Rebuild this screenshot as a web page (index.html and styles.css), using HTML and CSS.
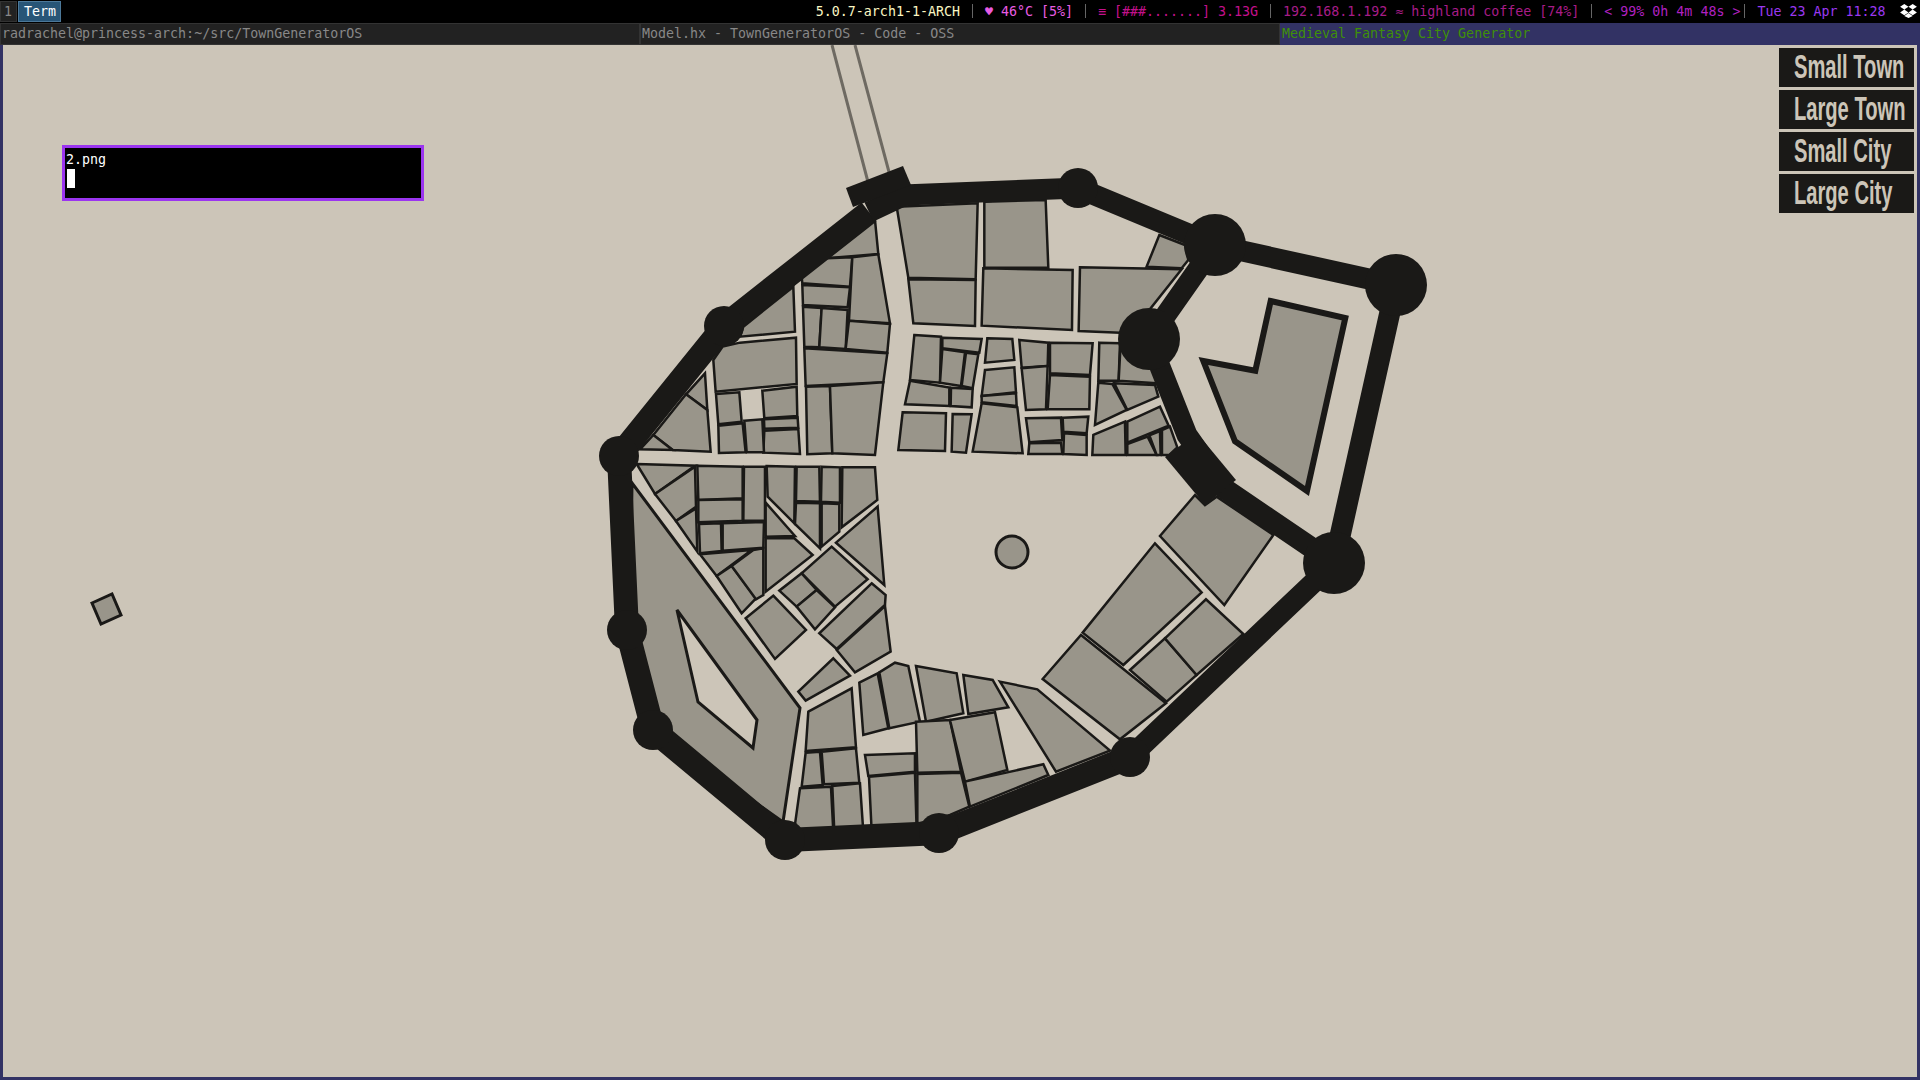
FILE: index.html
```html
<!DOCTYPE html>
<html lang="en">

<head>
    <meta charset="UTF-8">
    <title>Medieval Fantasy City Generator</title>
    <link rel="stylesheet" href="styles.css">
</head>

<body>

    <div class="bar">
        <div class="ws">1</div>
        <div class="ws ws-active">Term</div>
        <div class="status">
            <span class="kern">5.0.7-arch1-1-ARCH</span><i class="sep"></i>
            <span class="temp">♥ 46°C [5%]</span><i class="sep"></i>
            <span class="mem">≡ [###.......] 3.13G</span><i class="sep"></i>
            <span class="wifi">192.168.1.192 ≈ highland coffee [74%]</span><i class="sep"></i>
            <span class="batt">&lt; 99% 0h 4m 48s &gt;</span><i class="sep sep-tight"></i>
            <span class="date">Tue 23 Apr 11:28</span>
            <svg class="tray" viewBox="0 0 24 20">
                <path d="M6 0l6 4-6 4-6-4zM18 0l6 4-6 4-6-4zM6 8l6 4-6 4-6-4zM18 8l6 4-6 4-6-4zM12 13l6 4-6 3-6-3z" />
            </svg>
        </div>
    </div>

    <div class="tabs">
        <div class="tab">radrachel@princess-arch:~/src/TownGeneratorOS</div>
        <div class="tab">Model.hx - TownGeneratorOS - Code - OSS</div>
        <div class="tab tab-active">Medieval Fantasy City Generator</div>
    </div>

    <div class="win">
        <svg class="map" viewBox="3 45 1914 1032">
            <!-- road out of the north gate -->
            <path class="road" d="M832 45L868 182M855 45L889 172" />

            <polygon class="bld" points="92,603 112,594 121,615 101,624" />

            <!-- north west quarter -->
            <g class="blds" transform="translate(600 160) scale(.3333)">
                <polygon points="825,180 835,282 680,295" />
                <polygon points="605,350 680,295 757,292 750,380 607,370" />
                <polygon points="607,375 750,382 743,442 609,435" />
                <polygon points="609,440 665,444 658,562 613,560" />
                <polygon points="665,444 743,450 737,567 658,562" />
                <polygon points="757,292 835,283 870,490 747,482" />
                <polygon points="747,482 870,492 862,578 737,567" />
                <polygon points="613,565 862,580 850,667 617,678" />
                <polygon points="618,680 690,678 697,880 622,883" />
                <polygon points="690,678 850,667 825,885 697,880" />

                <polygon points="580,380 585,515 420,530 430,500" />
                <polygon points="340,600 368,560 420,548 588,533 590,672 347,695" />
                <polygon points="348,702 418,697 425,785 355,793" />
                <polygon points="487,692 590,680 592,768 493,775" />
                <polygon points="492,778 593,773 595,803 493,806" />
                <polygon points="493,812 595,807 600,882 490,878" />
                <polygon points="355,797 428,790 437,877 357,879" />
                <polygon points="433,782 487,778 492,877 440,877" />

                <polygon points="315,640 322,750 258,703" />
                <polygon points="258,703 322,750 332,875 218,870 160,825" />
                <polygon points="160,825 218,870 120,868" />
            </g>

            <!-- south west quarter -->
            <path class="bld" fill-rule="evenodd"
                d="M632 483L800 708L783 822L660 735L630 640ZM677 610L698 702L753 748L757 720Z" />

            <g class="blds" transform="translate(600 450) scale(.3333)">
                <polygon points="110,42 285,47 165,132" />
                <polygon points="165,132 285,50 288,170 228,213" />
                <polygon points="228,213 288,175 292,305" />
                <polygon points="292,47 428,50 428,145 295,150" />
                <polygon points="432,50 495,50 495,212 430,212" />
                <polygon points="295,150 428,148 428,212 295,217" />
                <polygon points="297,222 363,220 365,303 300,310" />
                <polygon points="368,220 492,216 490,293 368,302" />
                <polygon points="500,48 585,50 583,220 503,140" />
                <polygon points="497,158 585,258 497,260" />
                <polygon points="497,265 583,265 638,315 497,425" />
                <polygon points="590,50 658,50 660,155 588,153" />
                <polygon points="665,50 720,52 720,158 663,155" />
                <polygon points="588,158 660,160 660,295 585,222" />
                <polygon points="665,160 718,162 718,245 665,290" />
                <polygon points="727,52 825,52 832,150 725,232" />
                <polygon points="833,170 853,405 708,278" />
                <polygon points="300,313 455,300 350,378" />
                <polygon points="350,378 395,348 468,445 425,490" />
                <polygon points="395,348 460,300 490,295 490,435 468,448" />
                <polygon points="695,290 803,388 705,470 605,370" />
                <polygon points="605,370 650,420 590,470 538,422" />
                <polygon points="650,420 705,472 645,538 590,470" />
                <polygon points="520,437 618,540 525,627 437,505" />
                <polygon points="815,400 857,435 855,465 710,597 658,550" />
                <polygon points="855,468 872,605 765,667 710,600" />
                <polygon points="700,625 750,677 617,752 595,725" />
            </g>

            <!-- south quarter -->
            <g class="blds" transform="translate(600 640) scale(.3333)">
                <polygon points="625,215 755,145 768,322 617,333" />
                <polygon points="617,338 660,335 668,435 605,440" />
                <polygon points="665,335 768,325 778,428 672,433" />
                <polygon points="600,445 693,440 700,575 582,575" />
                <polygon points="697,438 780,430 790,575 703,575" />
                <polygon points="778,128 833,100 865,265 790,285" />
                <polygon points="838,97 885,68 925,78 960,245 868,265" />
                <polygon points="795,345 945,340 945,395 805,408" />
                <polygon points="807,410 945,398 950,570 815,572" />
            </g>

            <!-- south east quarter -->
            <g class="blds" transform="translate(900 460) scale(.3333)">
                <polygon points="48,618 170,640 190,760 78,785" />
                <polygon points="190,645 278,660 325,742 205,762" />
                <polygon points="48,785 150,780 183,935 52,938" />
                <polygon points="150,780 285,757 322,930 195,965" />
                <polygon points="195,965 430,913 445,945 210,1040" />
                <polygon points="52,942 183,938 208,1040 150,1065 60,1090 52,1090" />
                <polygon points="300,665 412,688 630,872 468,935" />
                <polygon points="428,657 543,525 798,730 660,838" />
                <polygon points="548,518 765,250 905,397 670,615" />
                <polygon points="690,630 795,535 890,645 800,725" />
                <polygon points="795,535 918,418 1030,522 890,645" />
                <polygon points="780,228 885,105 915,135 950,110 1120,225 973,435" />
            </g>

            <!-- north east quarter -->
            <g class="blds" transform="translate(880 160) scale(.3333)">
                <polygon points="50,140 293,130 287,358 85,353" />
                <polygon points="85,358 287,360 285,498 100,490" />
                <polygon points="313,125 497,120 505,323 313,323" />
                <polygon points="310,325 578,330 576,510 305,497" />
                <polygon points="600,322 905,328 800,460 720,518 596,513" />
                <polygon points="838,225 915,255 925,300 905,325 800,320" />
                <polygon points="103,525 183,530 180,668 90,660" />
                <polygon points="187,533 305,537 298,578 187,565" />
                <polygon points="187,567 255,577 243,678 180,668" />
                <polygon points="258,578 295,583 278,685 245,678" />
                <polygon points="90,662 208,683 208,738 75,733" />
                <polygon points="213,683 278,687 275,742 212,738" />
                <polygon points="322,535 397,537 403,600 315,608" />
                <polygon points="315,630 403,622 408,697 305,708" />
                <polygon points="305,708 408,700 410,738 305,727" />
                <polygon points="305,730 412,742 428,880 278,875" />
                <polygon points="418,540 505,548 503,618 425,623" />
                <polygon points="425,625 503,618 498,748 438,750" />
                <polygon points="510,548 638,550 630,645 510,640" />
                <polygon points="510,645 630,650 628,748 503,748" />
                <polygon points="68,757 198,760 195,873 55,870" />
                <polygon points="218,762 275,763 258,878 215,875" />
                <polygon points="438,775 543,773 547,840 448,847" />
                <polygon points="548,773 625,770 620,820 550,815" />
                <polygon points="448,850 543,848 547,882 445,882" />
                <polygon points="552,820 620,825 620,885 550,882" />
                <polygon points="658,548 720,550 716,662 655,662" />
                <polygon points="722,550 830,550 830,670 716,662" />
                <polygon points="655,668 697,672 740,750 645,795" />
                <polygon points="703,670 825,675 835,710 742,750" />
                <polygon points="640,825 735,785 737,885 637,885" />
                <polygon points="742,785 840,740 866,797 742,848" />
                <polygon points="742,852 803,830 830,885 742,885" />
                <polygon points="808,826 840,813 842,885 830,885" />
                <polygon points="846,810 870,800 892,862 868,885 846,885" />
            </g>

            <!-- castle and plaza -->
            <g class="keep" transform="translate(1120 230) scale(.3333)">
                <polygon points="452,213 676,264 561,783 345,634 250,393 406,422" />
            </g>
            <circle class="bld" cx="1012" cy="552" r="16" />

            <!-- walls -->
            <path class="wall wall-thick" d="M1130 757L939 833L785 840L653 730L627 630L619 456L724 326L869 212" />
            <path class="wall" d="M869 212L905 195L1078 188L1215 245L1396 285L1334 563L1130 757" />
            <path class="wall" d="M1215 245L1149 339L1187 435L1225 489L1334 563" />

            <polygon class="gate" points="846,188 903,166 911,185 853,207" />
            <polygon class="gate" points="1165,457 1205,505 1236,480 1197,433" />

            <circle class="tower" cx="1078" cy="188" r="20" />
            <circle class="tower" cx="724" cy="326" r="20" />
            <circle class="tower" cx="619" cy="456" r="20" />
            <circle class="tower" cx="627" cy="630" r="20" />
            <circle class="tower" cx="653" cy="730" r="20" />
            <circle class="tower" cx="785" cy="840" r="20" />
            <circle class="tower" cx="939" cy="833" r="20" />
            <circle class="tower" cx="1130" cy="757" r="20" />
            <circle class="tower" cx="1215" cy="245" r="31" />
            <circle class="tower" cx="1149" cy="339" r="31" />
            <circle class="tower" cx="1396" cy="285" r="31" />
            <circle class="tower" cx="1334" cy="563" r="31" />
        </svg>

        <div class="menu">
            <div class="menu-btn"><span>Small Town</span></div>
            <div class="menu-btn"><span>Large Town</span></div>
            <div class="menu-btn"><span>Small City</span></div>
            <div class="menu-btn"><span>Large City</span></div>
        </div>

        <div class="popup">
            <div class="popup-name">2.png</div>
            <div class="popup-cursor"></div>
        </div>
    </div>

</body>

</html>
```

FILE: styles.css
```css
body {
    display: flex;
    flex-direction: column;
    height: 100vh;
    margin: 0;
    overflow: hidden;
    background-color: #000;
    font-family: "DejaVu Sans Mono", monospace;
    font-size: 13.3px;
}

/* top status bar */
.bar {
    display: flex;
    height: 23px;
    line-height: 23px;
    white-space: nowrap;
}

.ws {
    box-sizing: border-box;
    height: 21px;
    margin: 1px 1px 0 0;
    padding: 0 4px 0 3px;
    border: 1px solid #333;
    line-height: 19px;
    background-color: #222;
    color: #888;
}

.ws-active {
    padding: 0 4px 0 5px;
    border-color: #4c7899;
    background-color: #285577;
    color: #fff;
}

.status {
    display: flex;
    margin-left: auto;
    white-space: pre;
}

.sep {
    width: 1px;
    height: 14px;
    margin: 4px 12px 0 12px;
    background-color: #666;
}

.sep-tight {
    margin: 4px 12.5px 0 3.5px;
}

.kern { color: #fbf7c4; }
.temp { color: #e85ce2; }
.mem { color: #c4108c; }
.wifi { color: #a81c88; }
.batt { color: #b020c0; }
.date { color: #9a38f0; }

.tray {
    width: 17px;
    height: 14px;
    margin: 4px 3px 0 14.5px;
    fill: #fff;
}

/* window title row */
.tabs {
    display: flex;
    height: 22px;
}

.tab {
    flex: 1;
    box-sizing: border-box;
    padding-left: 1px;
    border: 1px solid #333;
    line-height: 20px;
    background-color: #222;
    color: #888;
}

.tab-active {
    border-color: #323264;
    background-color: #323264;
    color: #3f8f08;
}

/* the focused window */
.win {
    position: relative;
    flex: 1;
    border: solid #323264;
    border-width: 0 3px 3px;
    background-color: #ccc5b8;
}

.map {
    position: absolute;
    top: 0;
    left: 0;
    width: 1914px;
    height: 1032px;
}

.road {
    fill: none;
    stroke: #6e6a62;
    stroke-width: 3;
}

.bld,
.blds {
    fill: #99958a;
    stroke: #1a1917;
    stroke-width: 3;
}

.blds {
    stroke-width: 7.5;
}

.keep {
    fill: #99958a;
    stroke: #1a1917;
    stroke-width: 18;
}

.wall {
    fill: none;
    stroke: #1a1917;
    stroke-width: 21;
}

.wall-thick {
    stroke-width: 24;
}

.gate,
.tower {
    fill: #1a1917;
}

/* generator buttons */
.menu {
    position: absolute;
    top: 3px;
    right: 3px;
    display: flex;
    flex-direction: column;
    gap: 3px;
}

.menu-btn {
    width: 135px;
    height: 39px;
    padding-left: 14.5px;
    box-sizing: border-box;
    overflow: hidden;
    background-color: #1a1917;
    color: #ccc5b8;
    font-family: "Liberation Sans", sans-serif;
    font-size: 33px;
    font-weight: bold;
    line-height: 37px;
    white-space: nowrap;
}

.menu-btn span {
    display: inline-block;
    transform: scaleX(0.61);
    transform-origin: left center;
}

/* floating terminal */
.popup {
    position: absolute;
    top: 100px;
    left: 59px;
    box-sizing: border-box;
    width: 362px;
    height: 56px;
    padding: 3px 1px 0;
    border: 3px solid #9b35f0;
    background-color: #000;
    color: #fff;
}

.popup-name {
    line-height: 18px;
}

.popup-cursor {
    width: 8px;
    height: 19px;
    margin-left: 1px;
    background-color: #fff;
}
```
